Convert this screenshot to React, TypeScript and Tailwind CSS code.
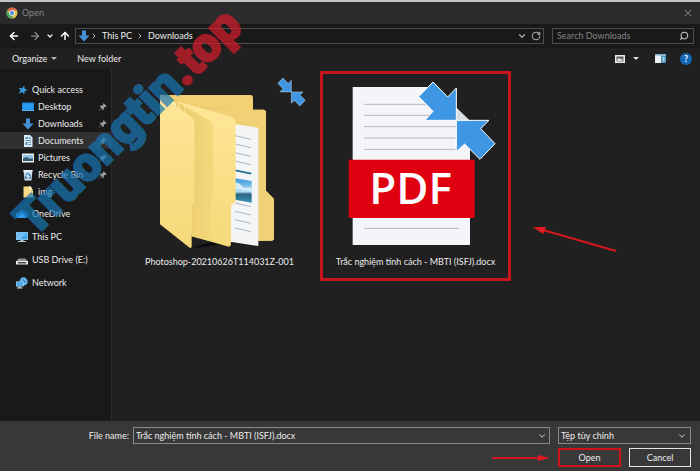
import { useState, type ReactNode } from "react";
import clsx from "clsx";
import {
  ArrowLeft,
  ArrowRight,
  ArrowUp,
  ChevronDown,
  ChevronRight,
  RotateCw,
  Search,
  X,
} from "lucide-react";

interface Place {
  id: string;
  label: string;
  icon: ReactNode;
  pinned?: boolean;
}

const ChromeIcon = () => (
  <svg viewBox="0 0 24 24" className="size-3 shrink-0">
    <circle cx="12" cy="12" r="11" fill="#e5c14f" />
    <path d="M12 12 2.5 6.5A11 11 0 0 1 21.6 6.8L12 7z" fill="#d9634f" />
    <path d="M2.5 6.5A11 11 0 0 0 11 23l5-8.500-8.300 0z" fill="#4aa564" />
    <circle cx="12" cy="12" r="5.500" fill="#fff" />
    <circle cx="12" cy="12" r="4.200" fill="#4a8ae8" />
  </svg>
);

const DownArrowIcon = () => (
  <svg viewBox="0 0 24 24" className="size-3 shrink-0">
    <path d="M8 1h8v10h7L12 23 1 11h7z" fill="#4592d8" />
  </svg>
);

const StarIcon = () => (
  <svg viewBox="0 0 24 24" className="size-2.5 shrink-0">
    <path d="M15 1l1 8 7 3-7 3-1 8-5-6-9 4 5-8-4-6 8 1z" fill="#3b9ae0" />
  </svg>
);

const DesktopIcon = () => (
  <svg viewBox="0 0 24 24" className="size-3 shrink-0">
    <path d="M0 3h24v17H0z" fill="#1d86dc" />
    <path d="M2 5h20v12H2z" fill="#2b9df2" />
    <path d="M0 18h24v2H0z" fill="#5bb8f5" />
  </svg>
);

const DocumentsIcon = () => (
  <svg viewBox="0 0 24 24" className="size-3 shrink-0">
    <path d="M4 0h12l5 5v19H4z" fill="#dcebf5" />
    <path d="M7 4h5v4H7zM14 4h3v4h-3zM7 10h11v2H7zM7 14h4v6H7zM13 14h5v2h-5zM13 18h5v2h-5z" fill="#5b93b8" />
  </svg>
);

const PicturesIcon = () => (
  <svg viewBox="0 0 24 24" className="size-3 shrink-0">
    <path d="M0 3h24v18H0z" fill="#e6eef2" />
    <path d="M2 6h20v12H2z" fill="#8fc3e4" />
    <path d="M2 13l7-3 6 3 7 0v5H2z" fill="#345d70" />
  </svg>
);

const RecycleIcon = () => (
  <svg viewBox="0 0 24 24" className="size-3 shrink-0">
    <path d="M3 2h18l-2 21H5z" fill="#cfdfea" />
    <path d="M3 2h18v3H3z" fill="#f1f6f9" />
    <path d="M12 8l4 5-2 0M8 13l-1 5h4M17 15l0 3h-4M8 12l3-4" fill="none" stroke="#2975b5" strokeWidth="2.200" />
  </svg>
);

const FileFolderIcon = () => (
  <svg viewBox="0 0 24 24" className="size-3 shrink-0">
    <path d="M3 1h15v8h4v14H3z" fill="#f8dc84" />
    <path d="M13 1h5l4 8h-6z" fill="#fff1bd" />
  </svg>
);

const CloudIcon = () => (
  <svg viewBox="0 0 24 24" className="size-3 shrink-0">
    <path d="M6 20a5.500 5.500 0 0 1-1-11 7 7 0 0 1 13-1 6 6 0 0 1 1 12z" fill="#1879ce" />
    <path d="M6 20a5.500 5.500 0 0 1-1-11c6-1 11 3 16 10l-2 1z" fill="#2f98ea" />
  </svg>
);

const ComputerIcon = () => (
  <svg viewBox="0 0 24 24" className="size-3 shrink-0">
    <path d="M0 2h24v16H0z" fill="#b7dcf3" />
    <path d="M1 3h22v14H1z" fill="#41a4e8" />
    <path d="M1 3h22L8 17H1z" fill="#73c1f3" />
    <path d="M9 18h6v2h5v2H4v-2h5z" fill="#b9cbd6" />
  </svg>
);

const DriveIcon = () => (
  <svg viewBox="0 0 24 24" className="size-3 shrink-0">
    <path d="M5 9h14l5 6H0z" fill="#8f9294" />
    <path d="M0 14h24v7H0z" fill="#e5e7e8" />
    <path d="M4 16h16v3H4z" fill="#45484a" />
  </svg>
);

const NetworkIcon = () => (
  <svg viewBox="0 0 24 24" className="size-3 shrink-0">
    <circle cx="15" cy="9" r="8.500" fill="#3f93d2" />
    <path d="M11 2c4 2 1 5-1 6M16 1c-1 5 5 4 6 8M14 16c0-5 5-2 8-4" fill="none" stroke="#a5dcf3" strokeWidth="2" />
    <path d="M0 9h15v10H0z" fill="#c4e4f6" />
    <path d="M1 10h13v8H1z" fill="#4badea" />
    <path d="M5 19h5v2h3v2H2v-2h3z" fill="#b9cbd6" />
  </svg>
);

const PinIcon = () => (
  <svg viewBox="0 0 24 24" className="size-2 shrink-0">
    <path d="M14 1l9 9-3 2-2-1-4 4 0 5-2 2-5-6-6 7-1-1 7-7-5-5 2-2 5 0 4-4-1-1z" fill="#9d9fa0" />
  </svg>
);

// Two arrows meeting in the middle, shown on compressed items
const CompressedArrows = ({ transform }: { transform?: string }) => (
  <g transform={transform} fill="#3f97e3" stroke="#fff" strokeWidth="3" strokeLinejoin="miter">
    <path d="M369 48 L326 92 L369 136 L345 163 L439 163 L439 66 L413 93 Z" />
    <path d="M439 163 L537 163 L512 188 L555 233 L510 280 L464 234 L439 257 Z" />
  </g>
);

const FolderThumbnail = () => (
  <svg viewBox="-39 24 555 528" className="w-full">
    <defs>
      <linearGradient id="flap" x1="0" y1="0" x2="0" y2="1">
        <stop offset="0" stopColor="#ffe699" />
        <stop offset="1" stopColor="#f6d978" />
      </linearGradient>
      <linearGradient id="inner" x1="0" y1="0" x2="1" y2="0">
        <stop offset="0" stopColor="#e8ca6c" />
        <stop offset="1" stopColor="#f5d87c" />
      </linearGradient>
      <linearGradient id="photo" x1="0" y1="0" x2="0" y2="1">
        <stop offset="0" stopColor="#3897dc" />
        <stop offset="0.550" stopColor="#b3dff5" />
        <stop offset="0.650" stopColor="#28657f" />
        <stop offset="1" stopColor="#3b93b6" />
      </linearGradient>
      <linearGradient id="shade" x1="0" y1="0" x2="1" y2="0">
        <stop offset="0" stopColor="#080808" />
        <stop offset="1" stopColor="#202020" />
      </linearGradient>
    </defs>
    <path d="M155 546 L300 500 L440 503 L355 525 Z" fill="url(#shade)" />
    <path d="M60 87 H331 Q339 87 339 95 V131 H370 Q378 131 378 140 V374 L402 399 V516 Q402 524 394 524 H330 L60 470 Z" fill="#edcd70" />
    <path d="M339 131 H370 Q378 131 378 140 V374 L402 399 V516 Q402 524 394 524 H350 V190 L287 160 L200 130 Z" fill="#f0d177" />
    <path d="M60 88 H330 L337 95 V131 L180 120 Z" fill="#f1d171" />
    <path d="M270 172 L355 185 V540 L270 527 Z" fill="#f4f5f7" />
    <path d="M285 209l48 11M285 234l48 11M285 260l48 11M285 285l48 11M285 411l48 11M285 436l48 11M285 461l48 11M285 486l48 11" stroke="#8695a0" strokeWidth="2" />
    <path d="M285 313l49 10" stroke="#216f91" strokeWidth="5" />
    <path d="M285 337 L335 345 V410 L285 401 Z" fill="url(#photo)" />
    <path d="M285 352q13-4 20 7t28 3v14l-48-7z" fill="#d4ecf8" />
    <path d="M108 105 L270 151 Q287 156 287 169 V405 L273 421 V532 Q273 545 261 541 L155 511 Z" fill="url(#flap)" />
    <path d="M108 105 L205 162 Q219 171 219 187 V383 L213 400 V526 L155 511 Z" fill="url(#inner)" />
    <path d="M118 109v30M134 114v30" stroke="#f9e69e" strokeWidth="3" />
    <path d="M60 87 L152 151 Q163 159 163 173 V406 L155 424 V540 Q155 549 147 544 L60 475 Z" fill="url(#flap)" />
    <path d="M60 87 L108 121 V112 Z" fill="#fff2ba" />
    <CompressedArrows transform="translate(296 19) scale(0.360)" />
  </svg>
);

const PdfThumbnail = () => (
  <svg viewBox="39 24 555 528" className="w-full">
    <path d="M128 63 H375 L480 165 V537 H128 Z" fill="#f4f5f8" />
    <path d="M375 63 L480 165 H375 Z" fill="#d9dce0" />
    <path d="M162 115h213M162 148h213M162 182h275M162 216h275M162 250h275M162 487h284" stroke="#a9abae" strokeWidth="2.500" />
    <path d="M116 281 H494 V456 H116 Z" fill="#df0010" />
    <text x="302" y="414" textAnchor="middle" fill="#fff" fontSize="132" fontWeight="600" fontFamily="'Open Sans', sans-serif">
      PDF
    </text>
    <CompressedArrows />
  </svg>
);

const quickPlaces: Place[] = [
  { id: "desktop", label: "Desktop", icon: <DesktopIcon />, pinned: true },
  { id: "downloads", label: "Downloads", icon: <DownArrowIcon />, pinned: true },
  { id: "documents", label: "Documents", icon: <DocumentsIcon />, pinned: true },
  { id: "pictures", label: "Pictures", icon: <PicturesIcon />, pinned: true },
  { id: "recycle", label: "Recycle Bin", icon: <RecycleIcon />, pinned: true },
  { id: "img", label: "img", icon: <FileFolderIcon /> },
];

const rootPlaces: Place[] = [
  { id: "onedrive", label: "OneDrive", icon: <CloudIcon /> },
  { id: "pc", label: "This PC", icon: <ComputerIcon /> },
  { id: "usb", label: "USB Drive (E:)", icon: <DriveIcon /> },
  { id: "network", label: "Network", icon: <NetworkIcon /> },
];

const files = [
  { name: "Photoshop-20210626T114031Z-001", thumbnail: <FolderThumbnail /> },
  { name: "Trắc nghiệm tính cách - MBTI (ISFJ).docx", thumbnail: <PdfThumbnail /> },
];

export default function App() {
  const [place, setPlace] = useState("documents");
  const [fileName, setFileName] = useState(files[1].name);

  return (
    <div className="relative flex min-h-screen flex-col overflow-hidden bg-[#202020] font-['Lato','Open_Sans',sans-serif] text-[9px] leading-3 text-[#ececec]">
      <header className="flex h-6 items-center gap-1 border-t-2 border-[#c4c4c4] bg-[#2b2b2b] px-1.5 text-[#858585]">
        <ChromeIcon />
        <h1 className="flex-1">Open</h1>
        <button aria-label="Close">
          <X className="size-3" strokeWidth={2} />
        </button>
      </header>

      <div className="flex h-6 items-center bg-[#191919] pr-1.5 pl-2">
        <div className="flex w-[67px] items-center justify-between pr-1">
          <button aria-label="Back"><ArrowLeft className="size-3 text-white" strokeWidth={3} /></button>
          <button aria-label="Forward" className="pl-1"><ArrowRight className="size-3 text-[#8b8b8b]" strokeWidth={2.5} /></button>
          <button aria-label="Recent locations"><ChevronDown className="size-2" strokeWidth={4} /></button>
          <button aria-label="Up"><ArrowUp className="size-3 text-white" strokeWidth={3} /></button>
        </div>
        <div className="flex h-4 flex-1 items-center border border-[#4d4d4d] px-0.5">
          <DownArrowIcon />
          <ChevronRight className="size-2 text-[#b0b0b0]" strokeWidth={3} />
          <button className="px-1">This PC</button>
          <ChevronRight className="size-2 text-[#b0b0b0]" strokeWidth={3} />
          <button className="px-1">Downloads</button>
          <span className="flex-1" />
          <button aria-label="Previous locations"><ChevronDown className="size-2.5 text-[#a8a8a8]" strokeWidth={3} /></button>
          <button aria-label="Refresh" className="ml-1"><RotateCw className="size-2.5 text-[#b0b0b0]" strokeWidth={2.5} /></button>
        </div>
        <div className="ml-2 flex h-4 w-[142px] items-center border border-[#4d4d4d] px-1">
          <input aria-label="Search Downloads" placeholder="Search Downloads" className="min-w-0 flex-1 outline-none placeholder:text-[#858585]" />
          <Search className="size-2.5 -scale-x-100 text-[#c4c4c4]" strokeWidth={2.5} />
        </div>
      </div>

      <div className="flex h-[21px] items-center bg-[#202020] px-3">
        <button className="flex items-center gap-1">
          Organize
          <svg viewBox="0 0 8 4" className="w-1.5"><path d="M0 0h8L4 4z" fill="#b5b5b5" /></svg>
        </button>
        <button className="ml-5">New folder</button>
        <span className="flex-1" />
        <button aria-label="Change view" className="flex items-center gap-2">
          <svg viewBox="0 0 20 16" className="w-2.5">
            <path d="M0 0h20v16H0z" fill="#eee" />
            <path d="M3 3h14v10H3z" fill="#555" />
            <path d="M4 10l4-5 4 4 3-3v6H4z" fill="#ddd" />
          </svg>
          <svg viewBox="0 0 8 4" className="w-1.5"><path d="M0 0h8L4 4z" fill="#ddd" /></svg>
        </button>
        <button aria-label="Preview pane" className="ml-4">
          <svg viewBox="0 0 22 18" className="w-[11px]">
            <path d="M0 0h22v18H0z" fill="#e8f1f5" />
            <path d="M12 3h10v15H12z" fill="#4b91be" />
            <path d="M0 0h22v3H0z" fill="#7caec9" />
            <path d="M15 6h4v9h-4z" fill="#a9d2e8" />
          </svg>
        </button>
        <button aria-label="Help" className="-mr-1 ml-3.5 flex size-3 items-center justify-center rounded-full bg-[#1267b5] font-bold text-white">
          ?
        </button>
      </div>

      <div className="flex flex-1">
        <nav className="w-28 shrink-0 border-r border-[#2b2b2b] bg-[#191919] pt-3">
          <button className="flex h-[17px] w-full items-center gap-1 pl-[18px]">
            <StarIcon />
            Quick access
          </button>
          {quickPlaces.map((item) => (
            <button
              key={item.id}
              onClick={() => setPlace(item.id)}
              className={clsx(
                "flex h-[17px] w-full items-center gap-1 pr-1 pl-[22px]",
                place === item.id && "bg-[#303030]"
              )}
            >
              {item.icon}
              <span className="flex-1 text-left">{item.label}</span>
              {item.pinned && <PinIcon />}
            </button>
          ))}
          <div className="pt-0.5">
            {rootPlaces.map((item) => (
              <button
                key={item.id}
                onClick={() => setPlace(item.id)}
                className={clsx(
                  "flex h-[23px] w-full items-center gap-1 pl-4",
                  place === item.id && "bg-[#303030]"
                )}
              >
                {item.icon}
                {item.label}
              </button>
            ))}
          </div>
        </nav>

        <main className="flex flex-1 items-start gap-[5px] pt-0.5 pl-3">
          {files.map((file) => (
            <div key={file.name} className="relative">
              <button
                onClick={() => setFileName(file.name)}
                className={clsx(
                  "block w-[191px] border-[3px] pb-2.5",
                  fileName === file.name ? "border-[#c4161c]" : "border-transparent"
                )}
              >
                {file.thumbnail}
                <span className="mt-1.5 block whitespace-nowrap">{file.name}</span>
              </button>
              {fileName === file.name && (
                <svg viewBox="0 0 84 28" className="pointer-events-none absolute top-[154px] left-full ml-[22px] w-[84px]">
                  <path d="M10 5L83 26" stroke="#d4161f" strokeWidth="2" />
                  <path d="M0 2L13 2L10 9z" fill="#e01b24" />
                </svg>
              )}
            </div>
          ))}
        </main>
      </div>

      <footer className="flex flex-col gap-1 bg-[#383838] pt-1.5 pr-[9px] pb-1">
        <div className="flex items-center">
          <label htmlFor="file-name" className="w-[133px] shrink-0 pr-1 text-right">File name:</label>
          <div className="flex h-[17px] flex-1 items-center border border-[#8a8a8a] px-0.5">
            <input id="file-name" value={fileName} onChange={(e) => setFileName(e.target.value)} className="min-w-0 flex-1 outline-none" />
            <button aria-label="Recent file names"><ChevronDown className="size-2.5" strokeWidth={2} /></button>
          </div>
          <div className="relative ml-2 w-[133px]">
            <select aria-label="File type" className="block h-[17px] w-full appearance-none border border-[#8a8a8a] bg-[#383838] px-0.5 outline-none">
              <option>Tệp tùy chỉnh</option>
            </select>
            <ChevronDown className="pointer-events-none absolute top-1 right-1 size-2.5" strokeWidth={2} />
          </div>
        </div>
        <div className="flex items-center justify-end">
          <svg viewBox="0 0 58 8" className="mr-2 w-[58px]">
            <path d="M0 4h48" stroke="#d4161f" strokeWidth="2" />
            <path d="M46 1l12 3-12 3z" fill="#e01b24" />
          </svg>
          <button className="h-[19px] w-[63px] border-2 border-[#d0121a]">Open</button>
          <button className="ml-2 h-[19px] w-[62px] border border-[#e4e4e4]">Cancel</button>
        </div>
      </footer>

      <div className="pointer-events-none absolute top-24 left-0 flex w-64 -rotate-45 justify-center">
        <p className="font-['Roboto',sans-serif] text-[48px] leading-[52px] font-black whitespace-nowrap text-[#1876b5] opacity-70 [-webkit-text-stroke:2px_currentColor]">
          Truongtin<span className="text-[#d81e2c]">.top</span>
        </p>
      </div>
    </div>
  );
}
